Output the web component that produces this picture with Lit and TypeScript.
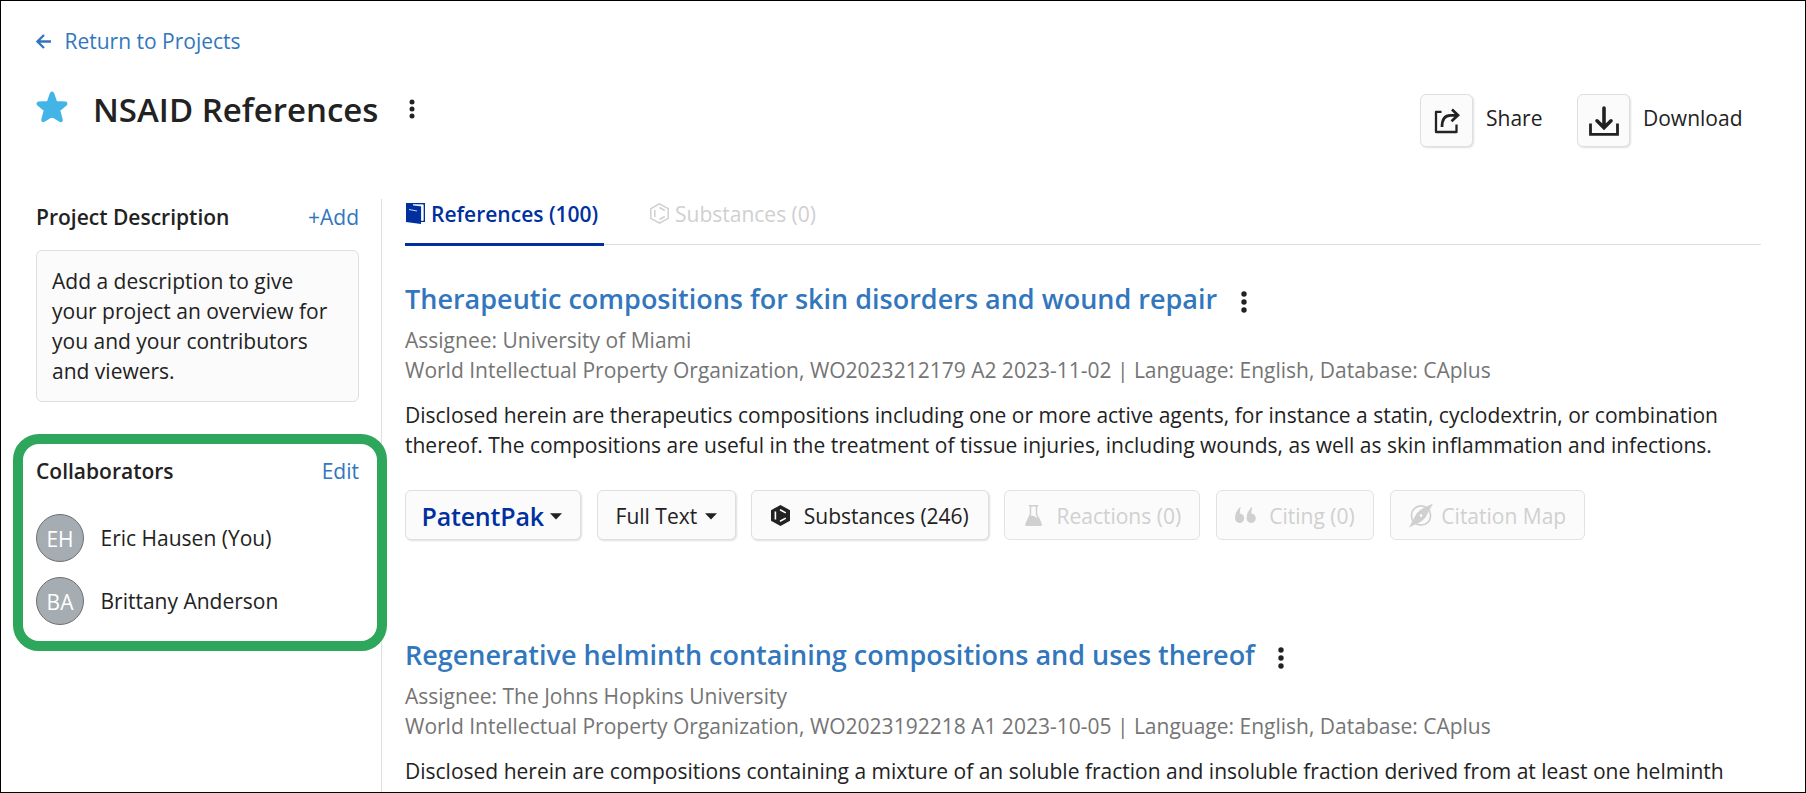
import { LitElement, html, css } from "lit";
import { customElement, property } from "lit/decorators.js";

const caret = html`<svg class="caret" width="12" height="7" viewBox="0 0 12 7"><path d="M0 .3H12L6 6.500Z" fill="#222"/></svg>`;

const icons = {
  hexSolid: html`<svg width="19" height="21" viewBox="0 0 19 21"><path d="M9.500 0 19 5.200V15.800L9.500 21 0 15.800V5.200Z" fill="#222"/><path d="M4.400 6.500V14.500M9 4.700 14.800 7.900M9 16.300 14.800 13.100" stroke="#fff" stroke-width="1.600" fill="none"/></svg>`,
  flask: html`<svg width="17" height="21" viewBox="0 0 17 21"><path d="M3.800 .8H13.200M5.500 1V9L1 19.500M11.500 1V9L16 19.500" stroke="#d0d0d0" stroke-width="1.500" fill="none"/><path d="M4.100 11.700 6 10.600 9.500 11.300 12.500 13.300 13.800 12 16.900 19.300Q17 21 15.600 21H1.400Q0 21 .1 19.300Z" fill="#d0d0d0"/></svg>`,
  quotes: html`<svg width="21" height="16" viewBox="0 0 21 16"><path d="M5 .3 5.800 .7Q4.700 3 4.800 6.500A4.600 4.700 0 1 1 0 11Q.2 4.500 5 .3ZM16.600 .3 17.400 .7Q16.300 3 16.400 6.500A4.600 4.700 0 1 1 11.600 11Q11.800 4.500 16.600 .3Z" fill="#d0d0d0"/></svg>`,
  compass: html`<svg width="24" height="25" viewBox="0 0 24 25"><circle cx="12" cy="12.500" r="9.600" fill="none" stroke="#d0d0d0" stroke-width="1.700"/><path d="M24 .5 16.500 14.500Q13.500 18.200 9.500 20L0 24.500 7.500 10.500Q10.500 6.800 14.500 5Z" fill="#d0d0d0"/><circle cx="12" cy="12.500" r="1.200" fill="#fff"/></svg>`,
};

interface Reference {
  title: string;
  assignee: string;
  source: string;
  abstract: string[];
}

const references: Reference[] = [
  {
    title: "Therapeutic compositions for skin disorders and wound repair",
    assignee: "University of Miami",
    source: "World Intellectual Property Organization, WO2023212179 A2 2023-11-02 | Language: English, Database: CAplus",
    abstract: [
      "Disclosed herein are therapeutics compositions including one or more active agents, for instance a statin, cyclodextrin, or combination",
      "thereof. The compositions are useful in the treatment of tissue injuries, including wounds, as well as skin inflammation and infections.",
    ],
  },
  {
    title: "Regenerative helminth containing compositions and uses thereof",
    assignee: "The Johns Hopkins University",
    source: "World Intellectual Property Organization, WO2023192218 A1 2023-10-05 | Language: English, Database: CAplus",
    abstract: [
      "Disclosed herein are compositions containing a mixture of an soluble fraction and insoluble fraction derived from at least one helminth",
    ],
  },
];

@customElement("reference-item")
class ReferenceItem extends LitElement {
  @property({ attribute: false }) item!: Reference;
  @property({ type: Boolean }) actions = false;

  static styles = css`
    :host { display: block; height: 356px; white-space: nowrap; }
    .title { display: flex; align-items: center; gap: 23.5px; height: 40px; font-size: 27px; font-weight: 600; color: #3277bd; }
    .kebab { fill: #222; margin-top: 5px; }
    .meta { margin-top: 6px; line-height: 30px; color: #757575; }
    .abstract { margin-top: 15px; line-height: 30px; color: #222; }
    .actions { display: flex; gap: 15.6px; margin-top: 30px; }
    .btn { display: flex; align-items: center; box-sizing: border-box; height: 50px; padding-top: 1px; border: 1px solid #dfdfdf; border-radius: 6px; background: #fbfbfb; box-shadow: 1px 1px 2px rgba(0,0,0,.13); color: #222; }
    .btn svg { margin-top: -1px; }
    .off { color: #d0d0d0; border-color: #e2e2e2; box-shadow: none; }
    .brand { width: 176px; padding-left: 15.5px; font-size: 25px; font-weight: 600; letter-spacing: -.2px; color: #0030a0; }
    .full { width: 139px; padding-left: 18px; }
    .subs { width: 237.5px; padding-left: 18.6px; }
    .reac { width: 196px; padding-left: 19.7px; }
    .cit { width: 158.3px; padding-left: 18.4px; }
    .map { width: 195.6px; padding-left: 18.6px; }
    .btn .caret { margin: 2px 0 0 6.5px; }
    .full .caret { margin-left: 7.5px; }
    .subs svg { margin-right: 14px; }
    .reac svg { margin-right: 14.5px; }
    .cit svg { margin-right: 13px; }
    .map svg { margin-right: 8px; }
  `;

  render() {
    const r = this.item;
    return html`
      <div class="title"><span>${r.title}</span><svg class="kebab" width="6" height="22" viewBox="0 0 6 22"><circle cx="3" cy="3" r="2.700"/><circle cx="3" cy="11" r="2.700"/><circle cx="3" cy="19" r="2.700"/></svg></div>
      <div class="meta"><div>Assignee: ${r.assignee}</div><div>${r.source}</div></div>
      <div class="abstract">${r.abstract.map((l) => html`<div>${l}</div>`)}</div>
      ${this.actions
        ? html`<div class="actions">
            <div class="btn brand">PatentPak${caret}</div>
            <div class="btn full">Full Text${caret}</div>
            <div class="btn subs">${icons.hexSolid}Substances (246)</div>
            <div class="btn off reac">${icons.flask}Reactions (0)</div>
            <div class="btn off cit">${icons.quotes}Citing (0)</div>
            <div class="btn off map">${icons.compass}Citation Map</div>
          </div>`
        : null}`;
  }
}

@customElement("app-root")
class AppRoot extends LitElement {
  static styles = css`
    :host { display: block; box-sizing: border-box; width: 1806px; height: 793px; overflow: hidden; border: 1px solid #000; background: #fff; font: 400 21px/30px "Open Sans", "Noto Sans", sans-serif; color: #222; white-space: nowrap; }
    .link { color: #3277bd; }
    .back { display: flex; align-items: center; gap: 13.5px; padding: 25px 0 0 35px; }
    .head { display: flex; align-items: flex-start; height: 143px; padding: 0 44px 0 35px; box-sizing: border-box; }
    .star { margin-top: 34.5px; }
    .h1 { margin: 30.5px 0 0 25px; font-size: 33px; font-weight: 600; line-height: 45px; }
    .kebab { margin: 43px 0 0 31px; fill: #222; }
    .tools { display: flex; margin-left: auto; padding-top: 38px; }
    .tool { display: flex; align-items: flex-start; }
    .box { display: flex; align-items: center; justify-content: center; box-sizing: border-box; width: 53px; height: 53px; border: 1px solid #dfdfdf; border-radius: 6px; background: #fbfbfb; box-shadow: 1px 1px 2px rgba(0,0,0,.13); }
    .tool span { margin-top: 9px; padding-left: 13px; }
    .share { width: 157px; }
    .down { width: 184px; }
    .cols { display: flex; height: 600px; }
    .side { box-sizing: border-box; width: 380px; padding: 3px 22px 0 35px; }
    .row { display: flex; justify-content: space-between; }
    .row b { font-weight: 600; }
    .desc { box-sizing: border-box; width: 323px; height: 152px; margin-top: 18px; padding: 15px; border: 1px solid #dfdfdf; border-radius: 6px; background: #fbfbfb; }
    .collab { position: relative; z-index: 1; box-sizing: border-box; width: 374px; height: 217px; margin: 32px 0 0 -23px; padding: 12px 18px 0 13px; border: 10px solid #2ea65c; border-radius: 26px; background: #fff; }
    .person { display: flex; align-items: center; gap: 16.500px; height: 48px; }
    .person + .person { margin-top: 15px; }
    .people { margin-top: 28px; }
    .avatar { box-sizing: border-box; width: 48px; height: 48px; border: 1px solid #6f6f6f; border-radius: 50%; background: #a5adb3; color: #fff; text-align: center; line-height: 48px; }
    .main { flex: 1; border-left: 1px solid #dfdfdf; padding: 0 44px 0 23px; }
    .tabs { display: flex; height: 45px; border-bottom: 1px solid #dfdfdf; }
    .tab { display: flex; align-items: flex-start; box-sizing: border-box; height: 47px; gap: 6px; }
    .active { width: 199px; border-bottom: 3px solid #0030a0; color: #0030a0; font-weight: 600; }
    .tab svg { margin: 4px 0 0 1px; }
    .idle { margin-left: 45px; color: #d0d0d0; }
    .list { padding-top: 34px; }
  `;

  render() {
    return html`
      <div class="back link">
        <svg width="15" height="15" viewBox="0 0 15 15"><path d="M8 1 1.500 7.500 8 14M1.500 7.500H15" fill="none" stroke="#3277bd" stroke-width="2.300"/></svg>
        <span>Return to Projects</span>
      </div>
      <div class="head">
        <svg class="star" width="32" height="32" viewBox="0 0 32 32"><path d="M16 2.800 19.300 12.300 29.200 12.700 21.900 18.800 24.600 29 16 23.600 7.400 29 10.100 18.800 2.800 12.700 12.700 12.300Z" fill="#42b4e6" stroke="#42b4e6" stroke-width="4.400" stroke-linejoin="round"/></svg>
        <div class="h1">NSAID References</div>
        <svg class="kebab" width="6" height="20" viewBox="0 0 6 20"><circle cx="3" cy="3" r="2.500"/><circle cx="3" cy="10" r="2.500"/><circle cx="3" cy="17" r="2.500"/></svg>
        <div class="tools">
          <div class="tool share">
            <div class="box"><svg width="26" height="26" viewBox="0 0 26 26"><path d="M7.500 3.800H2V24H22.500V16.500" fill="none" stroke="#222" stroke-width="2.300" stroke-linejoin="round"/><path d="M8 19Q8 7.300 16.500 7.300H23.500M18 1.500 24 7.300 17.500 13.300" fill="none" stroke="#222" stroke-width="2.700"/></svg></div>
            <span>Share</span>
          </div>
          <div class="tool down">
            <div class="box"><svg width="30" height="30" viewBox="0 0 30 30"><path d="M1.500 17.500V28.300H28.500V17.500" fill="none" stroke="#222" stroke-width="2.800"/><path d="M15 2V21M8 14.800 15 21.800 22 14.800" fill="none" stroke="#222" stroke-width="3.600" stroke-linecap="round"/></svg></div>
            <span>Download</span>
          </div>
        </div>
      </div>
      <div class="cols">
        <div class="side">
          <div class="row"><b>Project Description</b><span class="link">+Add</span></div>
          <div class="desc">Add a description to give<br>your project an overview for<br>you and your contributors<br>and viewers.</div>
          <div class="collab">
            <div class="row"><b>Collaborators</b><span class="link">Edit</span></div>
            <div class="people">
              <div class="person"><div class="avatar">EH</div>Eric Hausen (You)</div>
              <div class="person"><div class="avatar">BA</div>Brittany Anderson</div>
            </div>
          </div>
        </div>
        <div class="main">
          <div class="tabs">
            <div class="tab active">
              <svg width="19" height="21" viewBox="0 0 19 21"><path d="M0 0H19V19H15V21L0 19Z" fill="#0030a0"/><path d="M7 1.800 15.500 3V17.500H17.200V1.800ZM3 6.500 11 8" fill="#fff" stroke="#fff" stroke-width=".8"/></svg>
              <span>References (100)</span>
            </div>
            <div class="tab idle">
              <svg width="19" height="21" viewBox="0 0 19 21"><path d="M9.500 .8 18.200 5.700V15.300L9.500 20.200.8 15.300V5.700Z" fill="none" stroke="#d0d0d0" stroke-width="1.500"/><path d="M4.800 7V14M9.500 4.500 14.800 7.500M9.500 16.500 14.800 13.500" stroke="#d0d0d0" stroke-width="1.500"/></svg>
              <span>Substances (0)</span>
            </div>
          </div>
          <div class="list">${references.map((r, i) => html`<reference-item .item=${r} .actions=${i === 0}></reference-item>`)}</div>
        </div>
      </div>`;
  }
}
